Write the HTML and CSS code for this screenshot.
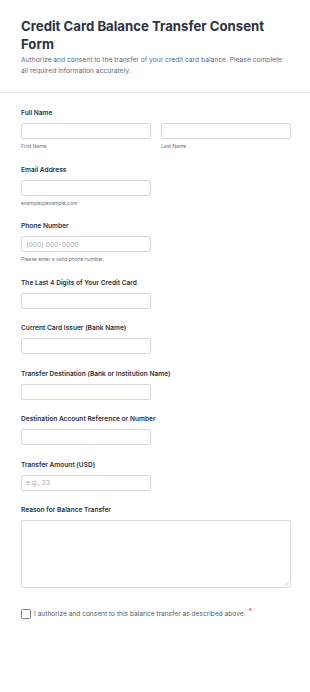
FILE: index.html
```html
<!DOCTYPE html>
<html lang="en">
<head>
<meta charset="utf-8">
<title>Credit Card Balance Transfer Consent Form</title>
<link rel="stylesheet" href="styles.css">
</head>
<body>
<div class="page">
  <header class="head">
    <h1 class="title">Credit Card Balance Transfer Consent Form</h1>
    <p class="desc">Authorize and consent to the transfer of your credit card balance. Please complete all required information accurately.</p>
  </header>
  <form class="form">
    <div class="field">
      <label class="label">Full Name</label>
      <div class="row">
        <div class="col">
          <div class="input"></div>
          <span class="sub">First Name</span>
        </div>
        <div class="col">
          <div class="input"></div>
          <span class="sub">Last Name</span>
        </div>
      </div>
    </div>
    <div class="field">
      <label class="label">Email Address</label>
      <div class="input half"></div>
      <span class="sub">example@example.com</span>
    </div>
    <div class="field">
      <label class="label">Phone Number</label>
      <div class="input half"><span class="ph">(000) 000-0000</span></div>
      <span class="sub">Please enter a valid phone number.</span>
    </div>
    <div class="field">
      <label class="label">The Last 4 Digits of Your Credit Card</label>
      <div class="input half"></div>
    </div>
    <div class="field">
      <label class="label">Current Card Issuer (Bank Name)</label>
      <div class="input half"></div>
    </div>
    <div class="field">
      <label class="label">Transfer Destination (Bank or Institution Name)</label>
      <div class="input half"></div>
    </div>
    <div class="field">
      <label class="label">Destination Account Reference or Number</label>
      <div class="input half"></div>
    </div>
    <div class="field">
      <label class="label">Transfer Amount (USD)</label>
      <div class="input half"><span class="ph">e.g., 23</span></div>
    </div>
    <div class="field">
      <label class="label">Reason for Balance Transfer</label>
      <div class="textarea">
        <svg class="grip" width="5" height="5" viewBox="0 0 5 5"><path d="M4.5 0.5 L0.5 4.5 M4.5 2.5 L2.5 4.5" stroke="#b8bcc9" stroke-width="0.7" fill="none"/></svg>
      </div>
    </div>
    <div class="check">
      <span class="box"></span>
      <span class="check-text">I authorize and consent to this balance transfer as described above.</span>
      <span class="req">*</span>
    </div>
  </form>
</div>
</body>
</html>
```
FILE: styles.css
```css
* { box-sizing: border-box; }
html, body { margin: 0; padding: 0; background: #fff; }
body { font-family: Inter, "Noto Sans", sans-serif; color: #2c3345; }
.page { width: 310px; }
.head {
  padding: 17px 21px 15px 21px;
  border-bottom: 1px solid #e6e7ec;
}
.title {
  margin: 0;
  font-size: 13.2px;
  line-height: 18px;
  font-weight: 700;
  color: #2c3345;
}
.desc {
  margin: 2px 0 0 0;
  font-size: 6.7px;
  line-height: 11px;
  color: #5f6b87;
}
.form {
  padding: 15px 19px 0 21px;
  display: flex;
  flex-direction: column;
}
.field {
  display: flex;
  flex-direction: column;
  margin-bottom: 14.5px;
}
.label {
  font-size: 6.6px;
  line-height: 10px;
  font-weight: 600;
  color: #2c3345;
  margin-bottom: 5px;
}
.row { display: flex; gap: 10px; }
.col { flex: 1; display: flex; flex-direction: column; }
.input {
  height: 16px;
  border: 1px solid #d5d8e1;
  border-radius: 2px;
  background: #fff;
  display: flex;
  align-items: center;
  padding-left: 4px;
}
.half { width: 130px; }
.ph { font-size: 6.8px; color: #a6abbd; }
.sub {
  font-size: 5px;
  line-height: 8px;
  color: #6b7184;
  margin-top: 3px;
}
.textarea {
  height: 68px;
  border: 1px solid #d5d8e1;
  border-radius: 2px;
  position: relative;
}
.grip { position: absolute; right: 1px; bottom: 1px; }
.check {
  display: flex;
  align-items: center;
  margin-top: 6px;
}
.box {
  width: 10px;
  height: 10px;
  border: 1px solid #7b8094;
  border-radius: 1.5px;
  margin-right: 3px;
  flex: none;
}
.check-text {
  font-size: 6.6px;
  line-height: 10px;
  color: #55596b;
}
.req {
  color: #f23a3c;
  font-size: 7px;
  line-height: 10px;
  margin-left: 3px;
  align-self: flex-start;
  margin-top: -2px;
}
```
